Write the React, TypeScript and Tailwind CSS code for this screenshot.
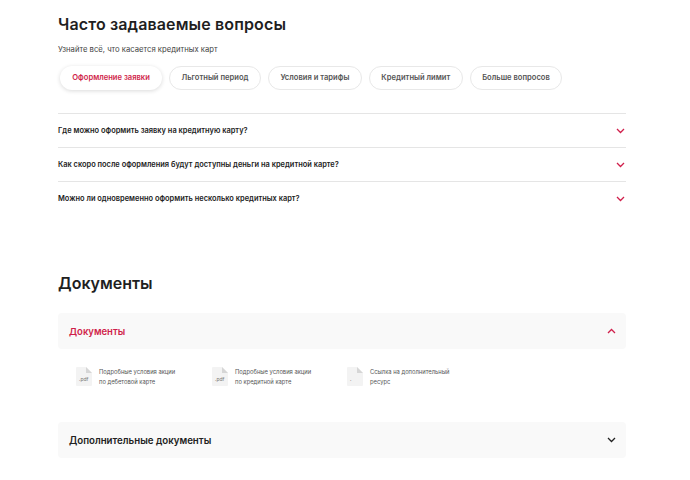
const tabs = ["Льготный период", "Условия и тарифы", "Кредитный лимит", "Больше вопросов"];

const questions = [
  "Где можно оформить заявку на кредитную карту?",
  "Как скоро после оформления будут доступны деньги на кредитной карте?",
  "Можно ли одновременно оформить несколько кредитных карт?",
];

const docs = [
  { ext: ".pdf", lines: ["Подробные условия акции", "по дебетовой карте"], width: "w-[136px]" },
  { ext: ".pdf", lines: ["Подробные условия акции", "по кредитной карте"], width: "w-[135px]" },
  { ext: ".", lines: ["Ссылка на дополнительный", "ресурс"], width: "w-[136px]" },
];

function Chevron({ up, color }: { up?: boolean; color: string }) {
  return (
    <svg width="9" height="6" viewBox="0 0 9 6" fill="none">
      <path d={up ? "M1 5L4.5 1.5L8 5" : "M1 1L4.5 4.5L8 1"} stroke={color} strokeWidth="1.3" />
    </svg>
  );
}

function FileIcon({ ext }: { ext: string }) {
  return (
    <div className="relative w-[16px] h-[19px] shrink-0">
      <svg width="16" height="19" viewBox="0 0 16 19">
        <path d="M1 0H10L16 6V18a1 1 0 0 1-1 1H1a1 1 0 0 1-1-1V1a1 1 0 0 1 1-1Z" fill="#f3f3f3" />
        <path d="M10 0L16 6H10Z" fill="#d6d6d6" />
      </svg>
      <span className="absolute left-[3px] top-[9px] text-[5px] leading-[6px] text-[#777777]">{ext}</span>
    </div>
  );
}

export default function App() {
  return (
    <div className="w-[690px] h-[480px] overflow-hidden bg-white pl-[58px] pr-[64px] pt-[13px] font-['Inter',sans-serif] text-[#1f1f1f]">
      <h2 className="text-[16px] leading-[22px] font-semibold tracking-[0.13px]">Часто задаваемые вопросы</h2>
      <p className="mt-[9px] text-[7.7px] leading-[12px] text-[#444444]">Узнайте всё, что касается кредитных карт</p>

      <div className="mt-[10px] ml-[2px] flex gap-[7px]">
        <button className="w-[102px] h-[24px] rounded-full bg-white text-[7.6px] font-semibold text-[#d01f4b] shadow-[0_1px_4px_rgba(0,0,0,0.15)]">
          Оформление заявки
        </button>
        {tabs.map((tab) => (
          <button
            key={tab}
            className="px-[11.5px] h-[24px] rounded-full border border-[#e8e8e8] bg-white text-[7.6px] font-semibold text-[#555555]"
          >
            {tab}
          </button>
        ))}
      </div>

      <div className="mt-[23px]">
        {questions.map((q) => (
          <div key={q} className="h-[34px] flex items-center justify-between border-t border-[#e5e5e5] pr-[1px]">
            <span className="text-[7.45px] font-semibold text-[#222222]">{q}</span>
            <Chevron color="#d01f4b" />
          </div>
        ))}
      </div>

      <h2 className="mt-[57px] text-[16px] leading-[22px] font-semibold">Документы</h2>

      <div className="mt-[19px] h-[36px] flex items-center justify-between rounded-[4px] bg-[#f9f9f9] pl-[11px] pr-[10px]">
        <span className="pt-[2px] text-[9.5px] font-semibold text-[#d01f4b]">Документы</span>
        <Chevron up color="#d01f4b" />
      </div>

      <div className="mt-[18px] ml-[18px] flex">
        {docs.map((doc) => (
          <div key={doc.lines[1]} className={`flex gap-[7px] ${doc.width}`}>
            <FileIcon ext={doc.ext} />
            <div className="text-[5.8px] leading-[10px] text-[#555555]">
              {doc.lines.map((line) => (
                <div key={line}>{line}</div>
              ))}
            </div>
          </div>
        ))}
      </div>

      <div className="mt-[35px] h-[36px] flex items-center justify-between rounded-[4px] bg-[#f9f9f9] pl-[11px] pr-[10px]">
        <span className="pt-[2px] text-[9.7px] font-semibold text-[#222222]">Дополнительные документы</span>
        <Chevron color="#222222" />
      </div>
    </div>
  );
}
